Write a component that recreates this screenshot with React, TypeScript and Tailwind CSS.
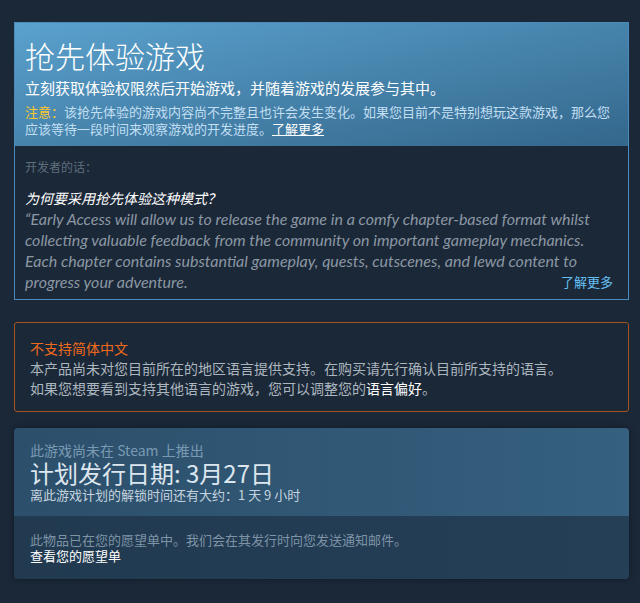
const cjk = "font-['Noto_Sans_CJK_SC','Noto_Sans',sans-serif]";

const quoteLines = [
  "“Early Access will allow us to release the game in a comfy chapter-based format whilst",
  "collecting valuable feedback from the community on important gameplay mechanics.",
  "Each chapter contains substantial gameplay, quests, cutscenes, and lewd content to",
  "progress your adventure.",
];

function EarlyAccessBox() {
  return (
    <div className="border border-[#4b8bbb]">
      <div className="bg-gradient-to-br from-[#5aa2ce] to-[#34678c] px-[10px] pt-[12px] pb-[9px]">
        <div className="text-[30px] leading-[40px] text-white font-light">抢先体验游戏</div>
        <div className="text-[15px] leading-[20px] text-white mt-[3px]">
          立刻获取体验权限然后开始游戏，并随着游戏的发展参与其中。
        </div>
        <div className="text-[13px] leading-[17px] text-[#c2dff2] mt-[5px]">
          <span className="text-[#ffc82c]">注意：</span>
          该抢先体验的游戏内容尚不完整且也许会发生变化。如果您目前不是特别想玩这款游戏，那么您应该等待一段时间来观察游戏的开发进度。
          <span className="underline text-white">了解更多</span>
        </div>
      </div>
      <div className="px-[10px] pt-[13px] pb-[7px]">
        <div className="text-[12px] leading-[16px] text-[#5f6e7c]">开发者的话：</div>
        <div className="mt-[14px] text-[14px] leading-[19px] italic text-white">为何要采用抢先体验这种模式？</div>
        <div className="relative">
          <p className="font-['Lato','Noto_Sans',sans-serif] italic text-[16px] leading-[21px] text-[#8b97a3]">
            {quoteLines.map((line) => (
              <span key={line} className="block whitespace-nowrap">
                {line}
              </span>
            ))}
          </p>
          <span className="absolute right-[5px] bottom-[1px] text-[13px] leading-[18px] text-[#66c0f4]">了解更多</span>
        </div>
      </div>
    </div>
  );
}

function LanguageBox() {
  return (
    <div className="mt-[22px] border border-[#a8521f] rounded-[3px] px-[15px] pt-[15px] pb-[12px]">
      <div className="text-[14px] leading-[20px] text-[#f06a1c]">不支持简体中文</div>
      <div className="text-[14px] leading-[20px] text-[#acb6bf]">
        本产品尚未对您目前所在的地区语言提供支持。在购买请先行确认目前所支持的语言。
      </div>
      <div className="text-[14px] leading-[21px] text-[#acb6bf]">
        如果您想要看到支持其他语言的游戏，您可以调整您的<span className="text-white">语言偏好</span>。
      </div>
    </div>
  );
}

function ReleaseBox() {
  return (
    <div className="mt-[16px] rounded-[4px] overflow-hidden shadow-[0_0_6px_rgba(0,0,0,0.35)]">
      <div className="bg-gradient-to-r from-[#2c4f6b] to-[#35607f] px-[16px] pt-[12px] h-[88px]">
        <div className="text-[14px] leading-[20px] text-[#7a9ab3]">此游戏尚未在 Steam 上推出</div>
        <div className="text-[24px] leading-[26px] text-[#dde6ee]">计划发行日期: 3月27日</div>
        <div className="text-[13px] leading-[18px] text-[#c6d4df]">离此游戏计划的解锁时间还有大约：1 天 9 小时</div>
      </div>
      <div className="bg-gradient-to-r from-[#213a50] to-[#253f57] px-[16px] pt-[16px] h-[63px]">
        <div className="text-[13px] leading-[16px] text-[#7e93a6]">此物品已在您的愿望单中。我们会在其发行时向您发送通知邮件。</div>
        <div className="text-[13px] leading-[16px] text-white">查看您的愿望单</div>
      </div>
    </div>
  );
}

export default function App() {
  return (
    <div className={`${cjk} bg-[#1b2838] min-h-[603px] w-[640px] pt-[22px] pb-[24px]`}>
      <div className="ml-[14px] w-[615px]">
        <EarlyAccessBox />
        <LanguageBox />
        <ReleaseBox />
      </div>
    </div>
  );
}
